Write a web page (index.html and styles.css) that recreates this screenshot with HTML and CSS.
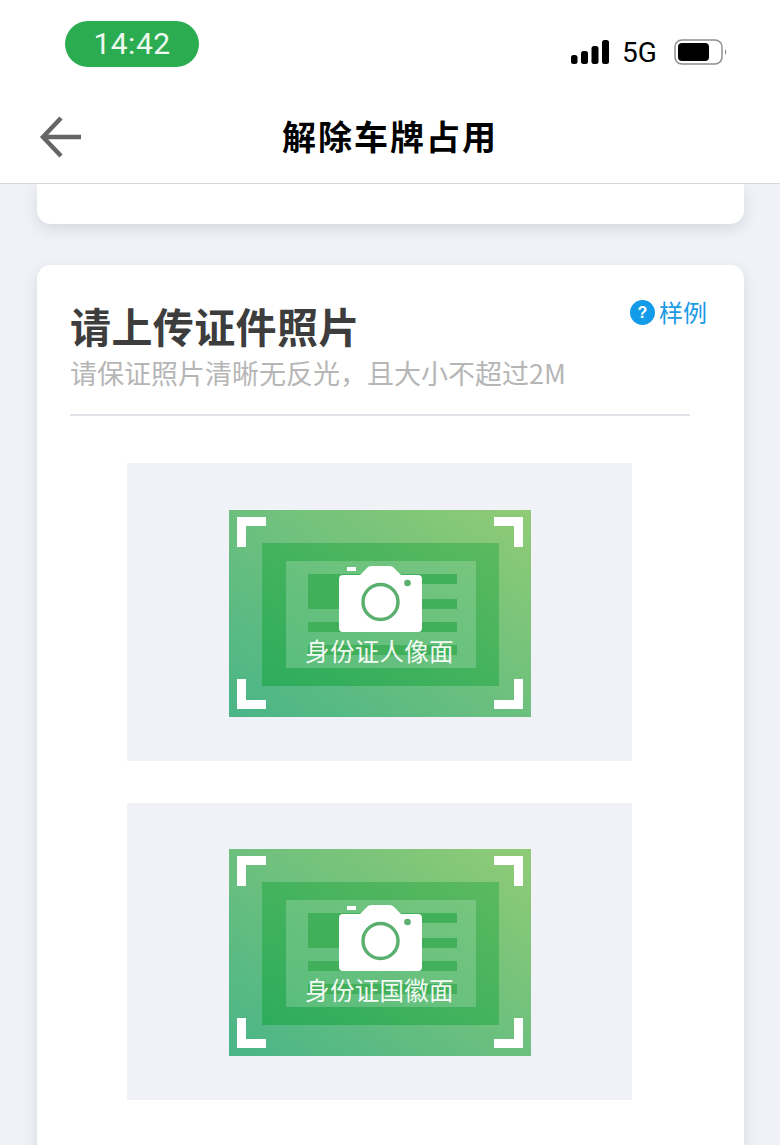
FILE: index.html
```html
<!DOCTYPE html>
<html lang="zh-CN">

<head>
  <meta charset="UTF-8">
  <meta name="viewport" content="width=device-width, initial-scale=1.0">
  <title>解除车牌占用</title>
  <link rel="stylesheet" href="styles.css">
</head>

<body>

  <svg class="defs" width="0" height="0" aria-hidden="true">
    <defs>
      <linearGradient id="bgGrad" x1="0" y1="1" x2="1" y2="0">
        <stop offset="0" stop-color="#49b587"/>
        <stop offset="1" stop-color="#90cb75"/>
      </linearGradient>
      <linearGradient id="frameGrad" x1="0" y1="1" x2="1" y2="0">
        <stop offset="0" stop-color="#2dac5c"/>
        <stop offset="1" stop-color="#5bb95f"/>
      </linearGradient>
      <symbol id="idCard" viewBox="0 0 302 207">
        <rect width="302" height="207" fill="url(#bgGrad)"/>
        <rect x="33" y="33" width="237" height="143" fill="url(#frameGrad)"/>
        <rect x="57" y="51" width="190" height="107" fill="#fff" fill-opacity="0.2"/>
        <g fill="#42b05a">
          <rect x="79" y="64" width="149" height="10"/>
          <rect x="79" y="74" width="40" height="15"/>
          <rect x="79" y="89" width="149" height="10"/>
          <rect x="79" y="112" width="149" height="10"/>
          <rect x="79" y="135" width="149" height="10"/>
        </g>
        <path fill="#fff" d="M8 7h29v9H17v21H8zM294 7h-29v9h20v21h9zM8 199h29v-9H17v-21H8zM294 199h-29v-9h20v-21h9z"/>
        <rect x="118" y="57" width="9" height="4" fill="#fff"/>
        <path fill="#fff" d="M114 65h17l6-6q2-3 6-3h17q4 0 6 3l6 6h17q4 0 4 4v49q0 4-4 4h-75q-4 0-4-4V69q0-4 4-4z"/>
        <circle cx="151.500" cy="92" r="17.500" fill="#fff" stroke="#5bb06f" stroke-width="3.500"/>
        <circle cx="178.500" cy="73" r="3.300" fill="#5bb06f"/>
      </symbol>
    </defs>
  </svg>

  <header class="top">
    <div class="status">
      <span class="time">14:42</span>
      <div class="status-right">
        <svg class="signal" width="38" height="24" viewBox="0 0 38 24">
          <rect x="0" y="15" width="6.500" height="9" rx="2.500"/>
          <rect x="10" y="11" width="7" height="13" rx="2.500"/>
          <rect x="20.500" y="6" width="7" height="18" rx="2.500"/>
          <rect x="31" y="0" width="7" height="24" rx="2.500"/>
        </svg>
        <span class="net">5G</span>
        <svg class="battery" width="54" height="26" viewBox="0 0 54 26">
          <rect x="1" y="1" width="47" height="24" rx="7" fill="none" stroke="#8e8e8e" stroke-width="1.500"/>
          <rect x="4" y="4" width="31" height="18" rx="4" fill="#000"/>
          <path d="M51 10q2.500 3 0 6z" fill="#8e8e8e"/>
        </svg>
      </div>
    </div>
    <nav class="nav">
      <svg class="back" width="44" height="42" viewBox="0 0 44 42">
        <path d="M42 21H5M22 2 4 21l18 19" fill="none" stroke="#666" stroke-width="4.500"/>
      </svg>
      <h1>解除车牌占用</h1>
    </nav>
  </header>

  <main class="content">
    <div class="card card-stub"></div>

    <section class="card card-upload">
      <div class="card-head">
        <div>
          <h2>请上传证件照片</h2>
          <p class="hint">请保证照片清晰无反光&#65292;且大小不超过2M</p>
        </div>
        <a class="sample">
          <span class="sample-icon">?</span>样例
        </a>
      </div>

      <div class="uploads">
        <div class="upload-box">
          <div class="id-pic">
            <svg width="302" height="207"><use href="#idCard"/></svg>
            <span class="id-label">身份证人像面</span>
          </div>
        </div>
        <div class="upload-box">
          <div class="id-pic">
            <svg width="302" height="207"><use href="#idCard"/></svg>
            <span class="id-label">身份证国徽面</span>
          </div>
        </div>
      </div>
    </section>
  </main>

</body>

</html>
```

FILE: styles.css
```css
* {
  box-sizing: border-box;
}

html,
body {
  margin: 0;
  padding: 0;
  height: 100%;
}

body {
  height: 1145px;
  overflow: hidden;
  background: #f0f2f7;
  font-family: "Noto Sans CJK SC", "Liberation Sans", sans-serif;
}

.defs {
  display: block;
  height: 0;
}

.top {
  position: relative;
  z-index: 2;
  height: 184px;
  background: #fff;
  border-bottom: 1px solid #d6d8da;
}

.status {
  height: 95px;
  display: flex;
  justify-content: space-between;
  padding: 21px 52px 0 65px;
}

.time {
  width: 134px;
  height: 46px;
  border-radius: 23px;
  background: #2cac50;
  color: #eefaf0;
  font-family: Roboto, sans-serif;
  font-size: 30px;
  line-height: 46px;
  letter-spacing: 0.500px;
  text-align: center;
}

.status-right {
  display: flex;
  align-items: flex-start;
  padding-top: 18px;
}

.signal {
  margin-top: 1px;
}

.net {
  margin-left: 13px;
  width: 39px;
  color: #000;
  font-family: Roboto, sans-serif;
  font-size: 28px;
  line-height: 28px;
}

.battery {
  margin-left: 13px;
}

.nav {
  position: relative;
  height: 88px;
  display: flex;
  align-items: center;
  justify-content: center;
}

.back {
  position: absolute;
  left: 39px;
  top: 21px;
}

.nav h1 {
  margin: 0 0 7px;
  font-size: 34px;
  font-weight: 700;
  letter-spacing: 2px;
  color: #000;
}

.content {
  padding: 0 36px 0 37px;
}

.card {
  background: #fff;
  box-shadow: 0 5px 14px rgba(60, 70, 90, 0.14);
}

.card-stub {
  height: 40px;
  margin-bottom: 41px;
  border-radius: 0 0 14px 14px;
}

.card-upload {
  border-radius: 14px 14px 0 0;
  padding: 0 54px 0 33px;
  height: 900px;
}

.card-head {
  display: flex;
  justify-content: space-between;
  align-items: flex-start;
  height: 151px;
  border-bottom: 2px solid #e3e4ea;
}

.card-head h2 {
  margin: 31px 0 0;
  font-size: 41px;
  line-height: 58px;
  font-weight: 700;
  letter-spacing: 0.400px;
  color: #3d3d3d;
}

.hint {
  margin: 0;
  font-size: 27px;
  line-height: 38px;
  color: #b6b6b6;
}

.sample {
  display: flex;
  align-items: center;
  margin: 29px -17px 0 0;
  font-size: 24px;
  line-height: 36px;
  color: #1a9be6;
}

.sample-icon {
  width: 25px;
  height: 25px;
  margin-right: 4px;
  border-radius: 50%;
  background: #129be8;
  color: #fff;
  font-family: "Liberation Sans", sans-serif;
  font-size: 16px;
  font-weight: 700;
  line-height: 25px;
  text-align: center;
}

.uploads {
  display: flex;
  flex-direction: column;
  gap: 42px;
  margin: 47px 0 0 57px;
  width: 505px;
}

.upload-box {
  height: 298px;
  padding-top: 47px;
  display: flex;
  justify-content: center;
  background: #f0f2f7;
}

.upload-box + .upload-box {
  height: 297px;
  padding-top: 46px;
}

.id-pic {
  position: relative;
  width: 302px;
  height: 207px;
}

.id-pic svg {
  display: block;
}

.id-label {
  position: absolute;
  left: 0;
  right: 0;
  top: 123px;
  color: #fff;
  opacity: 0.92;
  font-size: 24.500px;
  line-height: 36px;
  letter-spacing: 0.300px;
  text-align: center;
}
```
